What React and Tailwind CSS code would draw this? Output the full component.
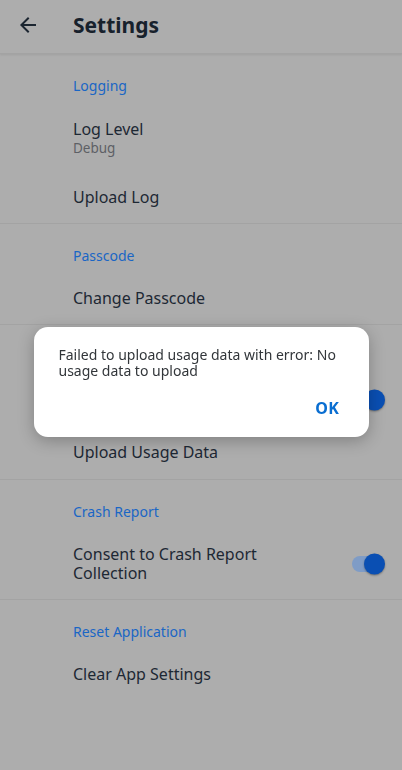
import React from 'react';

const FONT = { fontFamily: '"Noto Sans", "Open Sans", sans-serif' };

function Header({ children }){
  return (
    <div className="h-[48px] pl-[73px] pr-4 pt-[22px]">
      <div className="text-[14px] leading-[20px] text-[#1a66c5]">{children}</div>
    </div>
  );
}

function Row({ title, sub, toggle, h = 'h-[52px]' }){
  return (
    <div className={`flex items-center pl-[73px] pr-[18px] ${h}`}>
      <div className={`flex-1 pr-10 ${sub ? 'pt-[3px]' : ''}`}>
        {title && <div className="text-[16px] leading-[19px] text-[#1d2834]">{title}</div>}
        {sub && <div className="mt-[1px] text-[13.5px] leading-[16px] text-[#5d6065]">{sub}</div>}
      </div>
      {toggle && (
        <div className="relative h-[16px] w-[32px] rounded-full bg-[#7f9cc6]">
          <div className="absolute right-[-1px] top-1/2 h-[21px] w-[21px] -translate-y-1/2 rounded-full bg-[#0a4fb3] shadow-[0_1px_2px_rgba(0,0,0,0.35)]" />
        </div>
      )}
    </div>
  );
}

export default function App(){
  return (
    <div style={FONT} className="relative min-h-screen bg-[#adadad]">
      {/* Top bar */}
      <div className="flex h-[54px] items-center border-b border-[#a3a3a3] pb-[3px] shadow-[0_1px_2px_rgba(0,0,0,0.08)]">
        <svg viewBox="0 0 24 24" className="ml-4 h-6 w-6 fill-[#1b2530]">
          <path d="M20 11H7.83l5.59-5.59L12 4l-8 8 8 8 1.41-1.41L7.83 13H20v-2z" />
        </svg>
        <h1 className="ml-[33px] text-[21px] font-bold leading-none text-[#17212c]">Settings</h1>
      </div>

      {/* Logging */}
      <div className="border-b border-[#a3a3a3]">
        <Header>Logging</Header>
        <Row title="Log Level" sub="Debug" h="h-[69px]" />
        <Row title="Upload Log" />
      </div>

      {/* Passcode */}
      <div className="border-b border-[#a3a3a3]">
        <Header>Passcode</Header>
        <Row title="Change Passcode" />
      </div>

      {/* Usage (mostly under the dialog) */}
      <div className="border-b border-[#a3a3a3]">
        <Header>{''}</Header>
        <Row toggle h="h-[53px]" />
        <Row title="Upload Usage Data" h="h-[53px]" />
      </div>

      {/* Crash report */}
      <div className="border-b border-[#a3a3a3]">
        <Header>Crash Report</Header>
        <Row title="Consent to Crash Report Collection" toggle h="h-[71px]" />
      </div>

      {/* Reset */}
      <div>
        <Header>Reset Application</Header>
        <Row title="Clear App Settings" />
      </div>

      {/* Dialog */}
      <div className="fixed inset-0 flex items-center justify-center">
        <div className="mb-[6px] flex h-[110px] w-[335px] flex-col rounded-[14px] bg-white pl-[25px] pr-[22px] pt-[20px] shadow-[0_4px_16px_rgba(0,0,0,0.25)]">
          <p className="text-[14px] leading-[16px] text-[#32363a]">Failed to upload usage data with error: No usage data to upload</p>
          <div className="mt-auto mb-[20px] flex justify-end pr-[7px]">
            <button className="text-[16px] font-bold leading-[18px] tracking-[0.5px] text-[#0a6ed1]">OK</button>
          </div>
        </div>
      </div>
    </div>
  );
}
